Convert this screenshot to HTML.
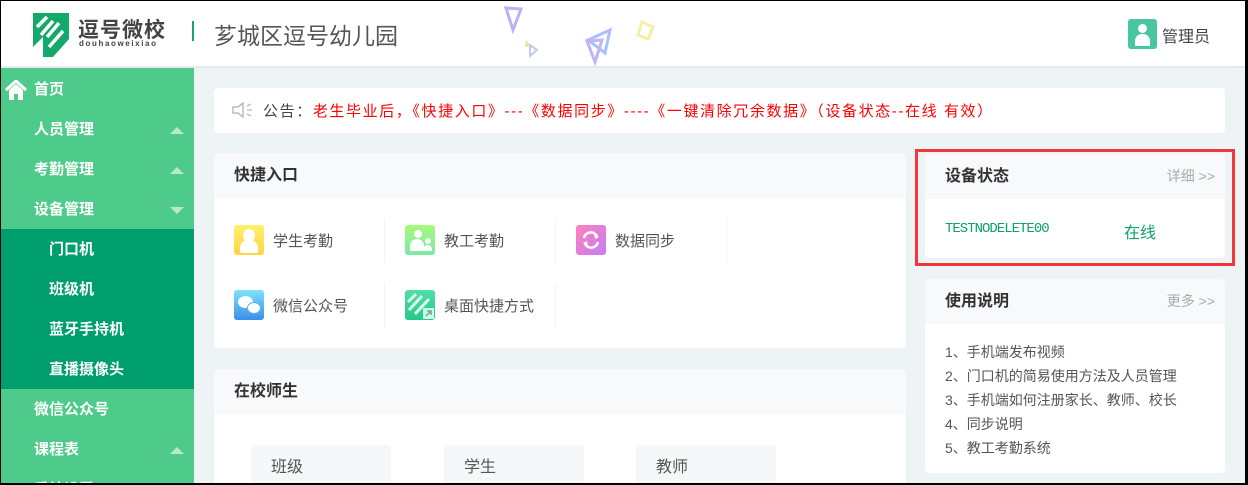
<!DOCTYPE html>
<html><head><meta charset="utf-8"><style>
*{margin:0;padding:0;box-sizing:border-box}
html{width:1248px;height:485px;overflow:hidden}
body{width:1248px;height:485px;overflow:hidden;background:#eef3f6;font-family:"Liberation Sans","Noto Sans CJK SC",sans-serif;position:relative}
.abs{position:absolute}
#hdr{left:0;top:0;width:1248px;height:68px;background:#fff;border-bottom:2px solid #e8e8e8}
#side{left:0;top:68px;width:194px;height:417px;background:#4ecb8a;overflow:hidden}
.mi{position:absolute;left:34px;color:#fff;font-size:15px;font-weight:bold;line-height:20px}
.si{position:absolute;left:49px;color:#fff;font-size:15px;font-weight:bold;line-height:20px}
.up{position:absolute;left:170px;width:0;height:0;border-left:7px solid transparent;border-right:7px solid transparent;border-bottom:7px solid #b8e8cd}
.dn{position:absolute;left:170px;width:0;height:0;border-left:7px solid transparent;border-right:7px solid transparent;border-top:7px solid #b8e8cd}
.card{position:absolute;background:#fff;border-radius:4px;overflow:hidden}
.ch{height:45px;background:#f8f9fb;font-size:16px;color:#333;font-weight:bold;line-height:45px;padding-left:20px}
.q{position:absolute;font-size:15px;color:#555;line-height:20px}
.ic{position:absolute;width:30px;height:30px;border-radius:3px}
.box{position:absolute;top:445px;width:140px;height:40px;background:#f6f7f8;border-radius:3px;font-size:16px;color:#555;padding:8px 0 0 20px}
.li{font-size:14px;color:#555;line-height:24px}
</style></head><body>
<div id="hdr" class="abs">
<svg class="abs" style="left:33px;top:13px" width="36" height="44" viewBox="0 0 36 44"><path d="M0 0H36V26L20 44H10V24L0 34Z" fill="#12a96a"/><path d="M4 14L14 4M8 22L20 8M14 24L26 10M16 34L30 18" stroke="#fff" stroke-width="3.5"/></svg>
<div class="abs" style="left:78px;top:14px;font-size:21px;font-weight:bold;color:#444;letter-spacing:1px">逗号微校</div>
<div class="abs" style="left:79px;top:39px;font-size:8px;color:#444;letter-spacing:1.6px;font-weight:bold">douhaoweixiao</div>
<div class="abs" style="left:192px;top:21px;width:2px;height:20px;background:#12a96a"></div>
<div class="abs" style="left:214px;top:17px;font-size:23px;color:#555">芗城区逗号幼儿园</div>
<svg class="abs" style="left:490px;top:0" width="240" height="70"><path d="M16 8L31 9L23 30Z" fill="none" stroke="#b9b3f5" stroke-width="3"/><path d="M98 40L120 30L115 53Z" fill="none" stroke="#a9c0ff" stroke-width="3"/><path d="M97 41L112 40L105 62Z" fill="none" stroke="#c2b3f5" stroke-width="3"/><path d="M152 22L163 27L158 39L148 35Z" fill="none" stroke="#f5f0a8" stroke-width="3"/><path d="M40 45L47 50L40 56Z" fill="none" stroke="#c0c8ee" stroke-width="2"/><path d="M36 40L40 46L35 47Z" fill="#f5e08a"/></svg>
<div class="abs" style="left:1128px;top:19px;width:29px;height:30px;border-radius:3px;background:#47c6a0"><div class="abs" style="left:10px;top:5px;width:9px;height:9px;border-radius:50%;background:#fff"></div><div class="abs" style="left:7px;top:15px;width:15px;height:12px;border-radius:7px 7px 0 0;background:#fff"></div></div>
<div class="abs" style="left:1162px;top:23px;font-size:16px;color:#444">管理员</div>
</div>
<div id="side" class="abs">
<svg class="abs" style="left:5px;top:12px" width="22" height="20" viewBox="0 0 22 20"><path d="M1 10L11 1L21 10" fill="none" stroke="#fff" stroke-width="3"/><path d="M4 10V20H9V14H13V20H18V10L11 4Z" fill="#fff"/></svg>
<div class="mi" style="top:12px">首页</div>
<div class="mi" style="top:52px">人员管理</div><div class="up" style="top:59px"></div>
<div class="mi" style="top:92px">考勤管理</div><div class="up" style="top:99px"></div>
<div class="mi" style="top:132px">设备管理</div><div class="dn" style="top:139px"></div>
<div class="abs" style="left:0;top:161px;width:194px;height:160px;background:#009e6c"></div>
<div class="si" style="top:172px">门口机</div>
<div class="si" style="top:212px">班级机</div>
<div class="si" style="top:252px">蓝牙手持机</div>
<div class="si" style="top:292px">直播摄像头</div>
<div class="mi" style="top:332px">微信公众号</div>
<div class="mi" style="top:372px">课程表</div><div class="up" style="top:379px"></div>
<div class="mi" style="top:412px">系统设置</div>
</div>
<div class="card" style="left:214px;top:88px;width:1011px;height:45px">
<svg class="abs" style="left:18px;top:14px" width="22" height="16"><path d="M1 5H6L11 1V15L6 11H1Z" fill="none" stroke="#bbb" stroke-width="1.5"/><path d="M15 4L19 2M15 8H20M15 12L19 14" stroke="#bbb" stroke-width="1.3"/></svg>
<div class="abs" style="left:49px;top:12px;font-size:15px;color:#444;white-space:nowrap;letter-spacing:1.6px">公告：<span style="color:#f00">老生毕业后，《快捷入口》---《数据同步》----《一键清除冗余数据》（设备状态--在线 有效）</span></div>
</div>
<div class="card" style="left:214px;top:153px;width:692px;height:195px">
<div class="ch">快捷入口</div>
<div class="abs" style="left:170px;top:65px;width:1px;height:45px;background:#f3f3f3"></div>
<div class="abs" style="left:341px;top:65px;width:1px;height:45px;background:#f3f3f3"></div>
<div class="abs" style="left:512px;top:65px;width:1px;height:45px;background:#f3f3f3"></div>
<div class="abs" style="left:170px;top:130px;width:1px;height:45px;background:#f3f3f3"></div>
<div class="abs" style="left:341px;top:130px;width:1px;height:45px;background:#f3f3f3"></div>
<div class="ic" style="left:20px;top:72px;background:linear-gradient(#fff06a,#ffd34a)"><div class="abs" style="left:9px;top:4px;width:12px;height:13px;border-radius:50%;background:#fff"></div><div class="abs" style="left:6px;top:15px;width:18px;height:13px;border-radius:8px 8px 2px 2px;background:#fff"></div></div>
<div class="q" style="left:59px;top:79px">学生考勤</div>
<div class="ic" style="left:191px;top:72px;background:linear-gradient(#a6fb7c,#7ce8a8)"><div class="abs" style="left:9px;top:5px;width:8px;height:8px;border-radius:50%;background:#fff"></div><div class="abs" style="left:5px;top:14px;width:14px;height:12px;border-radius:7px 7px 0 0;background:#fff"></div><div class="abs" style="left:20px;top:13px;width:6px;height:6px;border-radius:50%;background:#fff"></div><div class="abs" style="left:18px;top:20px;width:9px;height:6px;border-radius:5px 5px 0 0;background:#fff"></div></div>
<div class="q" style="left:230px;top:79px">教工考勤</div>
<div class="ic" style="left:362px;top:72px;background:linear-gradient(135deg,#ff82bb,#c57cf5)"><svg width="30" height="30"><path d="M8 13A7 7 0 0 1 21 11M22 17A7 7 0 0 1 9 19" fill="none" stroke="#fff" stroke-width="2.5"/><path d="M18 8L23 12L19 14Z M12 22L7 18L11 16Z" fill="#fff"/></svg></div>
<div class="q" style="left:401px;top:79px">数据同步</div>
<div class="ic" style="left:20px;top:137px;background:linear-gradient(#7fe2fb,#3a8fe8)"><div class="abs" style="left:4px;top:6px;width:15px;height:12px;border-radius:50%;background:#fff"></div><div class="abs" style="left:13px;top:12px;width:14px;height:12px;border-radius:50%;background:#fff;border:1px solid #5ab0f0"></div></div>
<div class="q" style="left:59px;top:144px">微信公众号</div>
<div class="ic" style="left:191px;top:137px;background:linear-gradient(#4ee0a8,#25c88a)"><svg width="30" height="30"><path d="M3 12L11 4M4 20L17 6M10 24L24 9" stroke="#dffaf0" stroke-width="3"/><rect x="18" y="18" width="11" height="11" fill="#cfe"/><path d="M21 26L26 21M22 21H26V25" stroke="#6a8" stroke-width="1.5" fill="none"/></svg></div>
<div class="q" style="left:230px;top:144px">桌面快捷方式</div>
</div>
<div class="card" style="left:214px;top:369px;width:692px;height:116px;border-radius:4px 4px 0 0">
<div class="ch">在校师生</div>
</div>
<div class="box" style="left:251px">班级</div>
<div class="box" style="left:444px">学生</div>
<div class="box" style="left:636px">教师</div>
<div class="abs" style="left:915px;top:149px;width:320px;height:117px;border:3px solid #f0373b"></div>
<div class="card" style="left:925px;top:154px;width:300px;height:104px">
<div class="ch">设备状态<span style="float:right;margin-right:10px;font-weight:normal;font-size:14px;color:#aaa">详细 &gt;&gt;</span></div>
<div class="abs" style="left:20px;top:67px;font-size:14px;color:#0ea26a;font-family:'Liberation Mono',monospace;letter-spacing:-1px">TESTNODELETE00</div>
<div class="abs" style="left:199px;top:65px;font-size:16px;color:#0ea26a">在线</div>
</div>
<div class="card" style="left:925px;top:279px;width:300px;height:194px">
<div class="ch">使用说明<span style="float:right;margin-right:10px;font-weight:normal;font-size:14px;color:#aaa">更多 &gt;&gt;</span></div>
<div style="padding:16px 0 0 20px">
<div class="li">1、手机端发布视频</div>
<div class="li">2、门口机的简易使用方法及人员管理</div>
<div class="li">3、手机端如何注册家长、教师、校长</div>
<div class="li">4、同步说明</div>
<div class="li">5、教工考勤系统</div>
</div></div>
<div class="abs" style="left:0;top:0;width:1248px;height:485px;border:1px solid #000;border-right-width:3px;border-bottom-width:2px"></div>
</body></html>
